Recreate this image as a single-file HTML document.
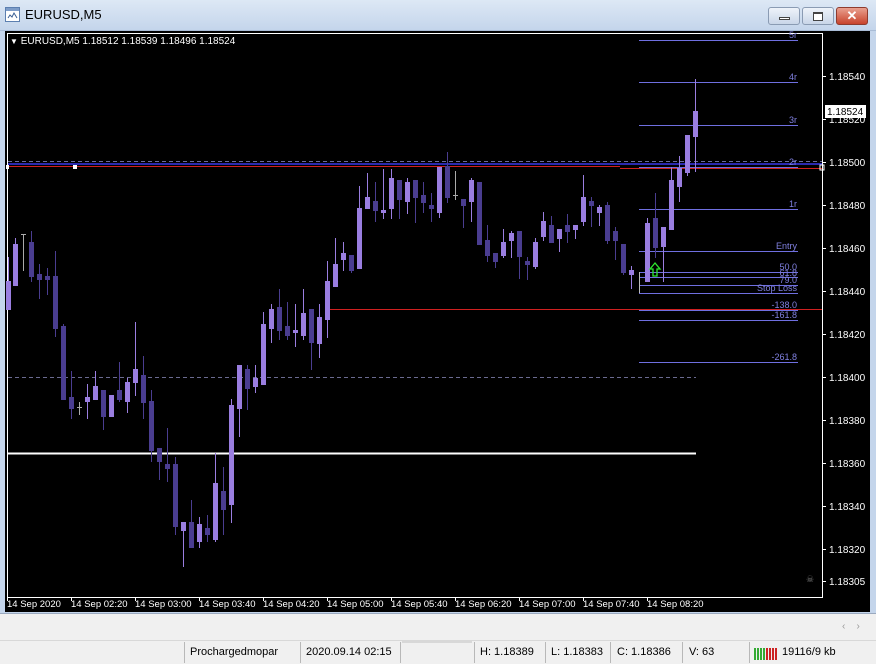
<!DOCTYPE html>
<html><head><meta charset="utf-8"><style>
*{margin:0;padding:0;box-sizing:border-box}
body{width:876px;height:664px;overflow:hidden;background:#f0f0f0;font-family:"Liberation Sans",sans-serif;position:relative}
.title{position:absolute;left:0;top:0;width:876px;height:31px;background:linear-gradient(#dde8f5,#c4d5eb);border-bottom:1px solid #a9bcd6}
.title span{position:absolute;left:25px;top:7px;font-size:13px;color:#000}
.btn{position:absolute;top:7px;height:18px;border:1px solid #8a9bb3;border-radius:3px;background:linear-gradient(#eef3fa,#c9d6e8)}
.sb{position:absolute;top:641px;height:23px;font-size:11px;line-height:23px;color:#000}
.sep{position:absolute;top:642px;width:1px;height:21px;background:#b8b8b8}
</style></head><body>
<div class="title">
<svg style="position:absolute;left:5px;top:7px" width="15" height="15"><rect x="0.5" y="0.5" width="14" height="14" fill="#fff" stroke="#5c7fb0"/><rect x="1" y="1" width="13" height="3" fill="#7d9cc8"/><path d="M3 11l2-3 2 2 2-4 3 5" stroke="#3a5f95" fill="none"/></svg>
<span>EURUSD,M5</span>
<div class="btn" style="left:768px;width:32px"><div style="position:absolute;left:10px;top:9px;width:11px;height:3px;background:#fff;border:1px solid #444"></div></div>
<div class="btn" style="left:802px;width:32px"><div style="position:absolute;left:10px;top:4px;width:10px;height:9px;border:1px solid #444;border-top-width:2px;background:#fff"></div></div>
<div class="btn" style="left:836px;width:32px;background:linear-gradient(#e9a08f,#c8432c);border-color:#8e3b2e;color:#fff;font-weight:bold;font-size:13px;text-align:center;line-height:16px">✕</div>
</div>
<div style="position:absolute;left:0;top:31px;width:876px;height:582px;background:#c4d5eb"></div>
<svg style="position:absolute;left:5px;top:31px" width="865" height="581" viewBox="5 31 865 581">
<rect x="5" y="31" width="865" height="581" fill="#000"/>
<rect x="7.5" y="33.5" width="815" height="564" fill="none" stroke="#fff"/>
<g font-family="Liberation Sans,sans-serif" font-size="10" fill="#fff">
<text x="10" y="44"><tspan font-size="8">▼</tspan> EURUSD,M5  1.18512 1.18539 1.18496 1.18524</text>
</g>
<!-- horizontal lines -->
<line x1="8" y1="161.5" x2="822" y2="161.5" stroke="#6a6aa0" stroke-dasharray="4,3"/>
<line x1="8" y1="164" x2="822" y2="164" stroke="#2a2ab0" stroke-width="2"/>
<line x1="8" y1="166.5" x2="620" y2="166.5" stroke="#d02020"/>
<line x1="620" y1="168.5" x2="822" y2="168.5" stroke="#d02020"/>
<line x1="328" y1="309.5" x2="822" y2="309.5" stroke="#d02020"/>
<line x1="8" y1="377.5" x2="696" y2="377.5" stroke="#6a6a90" stroke-dasharray="4,3"/>
<line x1="8" y1="453.5" x2="696" y2="453.5" stroke="#fff" stroke-width="2"/>
<rect x="73" y="165" width="4" height="4" fill="#fff"/><rect x="6" y="165" width="3" height="4" fill="#fff"/><rect x="820" y="165" width="4" height="5" fill="none" stroke="#fff"/>
<!-- fib lines -->
<g stroke="#6f6fe0">
<line x1="639" y1="40.5" x2="798" y2="40.5"/><line x1="639" y1="82.5" x2="798" y2="82.5"/>
<line x1="639" y1="125.5" x2="798" y2="125.5"/><line x1="639" y1="167.5" x2="798" y2="167.5"/>
<line x1="639" y1="209.5" x2="798" y2="209.5"/><line x1="639" y1="251.5" x2="798" y2="251.5"/>
<line x1="639" y1="272.5" x2="798" y2="272.5"/><line x1="639" y1="277.5" x2="798" y2="277.5"/>
<line x1="639" y1="285.5" x2="798" y2="285.5"/><line x1="639" y1="293.5" x2="798" y2="293.5"/>
<line x1="639" y1="310.5" x2="798" y2="310.5"/><line x1="639" y1="320.5" x2="798" y2="320.5"/>
<line x1="639" y1="362.5" x2="798" y2="362.5"/>
</g>
<line x1="639.5" y1="272" x2="639.5" y2="293" stroke="#bbb"/>
<g font-family="Liberation Sans,sans-serif" font-size="9" fill="#8080e0" text-anchor="end">
<text x="797" y="38">5r</text><text x="797" y="80">4r</text><text x="797" y="123">3r</text><text x="797" y="165">2r</text>
<text x="797" y="207">1r</text><text x="797" y="249">Entry</text><text x="797" y="270">50.0</text><text x="797" y="276">61.8</text>
<text x="797" y="283">79.0</text><text x="797" y="291">Stop Loss</text><text x="797" y="308">-138.0</text><text x="797" y="318">-161.8</text><text x="797" y="360">-261.8</text>
</g>
<!-- candles -->
<g id="c">
<g stroke="#9a7ee0" fill="#9a7ee0">
<line x1="8.5" y1="257" x2="8.5" y2="310"/><rect x="6" y="281" width="5" height="29" stroke="none"/>
<line x1="15.5" y1="238" x2="15.5" y2="286"/><rect x="13" y="244" width="5" height="42" stroke="none"/>
<line x1="23.5" y1="234" x2="23.5" y2="271" stroke="#aaa"/><line x1="21" y1="234.5" x2="26" y2="234.5" stroke="#aaa"/>
<line x1="79.5" y1="402" x2="79.5" y2="415" stroke="#aaa"/><line x1="77" y1="407.5" x2="82" y2="407.5" stroke="#aaa"/>
<line x1="87.5" y1="384" x2="87.5" y2="419"/><rect x="85" y="397" width="5" height="5" stroke="none"/>
<line x1="95.5" y1="371" x2="95.5" y2="400"/><rect x="93" y="386" width="5" height="14" stroke="none"/>
<rect x="109" y="395" width="5" height="22" stroke="none"/>
<line x1="127.5" y1="378" x2="127.5" y2="413"/><rect x="125" y="382" width="5" height="20" stroke="none"/>
<line x1="135.5" y1="322" x2="135.5" y2="396"/><rect x="133" y="369" width="5" height="14" stroke="none"/>
<line x1="183.5" y1="522" x2="183.5" y2="567"/><rect x="181" y="522" width="5" height="9" stroke="none"/>
<line x1="199.5" y1="517" x2="199.5" y2="548"/><rect x="197" y="524" width="5" height="18" stroke="none"/>
<line x1="215.5" y1="453" x2="215.5" y2="542"/><rect x="213" y="483" width="5" height="57" stroke="none"/>
<line x1="231.5" y1="399" x2="231.5" y2="523"/><rect x="229" y="405" width="5" height="100" stroke="none"/>
<line x1="239.5" y1="365" x2="239.5" y2="437"/><rect x="237" y="365" width="5" height="44" stroke="none"/>
<line x1="255.5" y1="365" x2="255.5" y2="393"/><rect x="253" y="378" width="5" height="9" stroke="none"/>
<line x1="263.5" y1="312" x2="263.5" y2="385"/><rect x="261" y="324" width="5" height="61" stroke="none"/>
<line x1="271.5" y1="304" x2="271.5" y2="343"/><rect x="269" y="309" width="5" height="20" stroke="none"/>
<line x1="295.5" y1="304" x2="295.5" y2="347"/><rect x="293" y="330" width="5" height="3" stroke="none"/>
<line x1="303.5" y1="289" x2="303.5" y2="340"/><rect x="301" y="313" width="5" height="23" stroke="none"/>
<line x1="319.5" y1="304" x2="319.5" y2="358"/><rect x="317" y="317" width="5" height="27" stroke="none"/>
<line x1="327.5" y1="261" x2="327.5" y2="338"/><rect x="325" y="281" width="5" height="39" stroke="none"/>
<line x1="335.5" y1="238" x2="335.5" y2="287"/><rect x="333" y="264" width="5" height="23" stroke="none"/>
<line x1="343.5" y1="242" x2="343.5" y2="271"/><rect x="341" y="253" width="5" height="7" stroke="none"/>
<line x1="359.5" y1="186" x2="359.5" y2="269"/><rect x="357" y="208" width="5" height="61" stroke="none"/>
<line x1="367.5" y1="173" x2="367.5" y2="209"/><rect x="365" y="197" width="5" height="12" stroke="none"/>
<line x1="383.5" y1="169" x2="383.5" y2="219"/><rect x="381" y="210" width="5" height="3" stroke="none"/>
<line x1="391.5" y1="169" x2="391.5" y2="219"/><rect x="389" y="178" width="5" height="31" stroke="none"/>
<line x1="407.5" y1="178" x2="407.5" y2="214"/><rect x="405" y="182" width="5" height="20" stroke="none"/>
<line x1="439.5" y1="167" x2="439.5" y2="218"/><rect x="437" y="167" width="5" height="46" stroke="none"/>
<line x1="455.5" y1="171" x2="455.5" y2="200" stroke="#aaa"/><line x1="453" y1="195.5" x2="458" y2="195.5" stroke="#aaa"/>
<line x1="471.5" y1="178" x2="471.5" y2="222"/><rect x="469" y="180" width="5" height="22" stroke="none"/>
<line x1="503.5" y1="229" x2="503.5" y2="258"/><rect x="501" y="242" width="5" height="14" stroke="none"/>
<line x1="511.5" y1="231" x2="511.5" y2="258"/><rect x="509" y="233" width="5" height="8" stroke="none"/>
<line x1="535.5" y1="238" x2="535.5" y2="269"/><rect x="533" y="242" width="5" height="25" stroke="none"/>
<line x1="543.5" y1="212" x2="543.5" y2="241"/><rect x="541" y="221" width="5" height="16" stroke="none"/>
<line x1="559.5" y1="229" x2="559.5" y2="252"/><rect x="557" y="229" width="5" height="10" stroke="none"/>
<line x1="575.5" y1="225" x2="575.5" y2="239"/><rect x="573" y="225" width="5" height="5" stroke="none"/>
<line x1="583.5" y1="175" x2="583.5" y2="226"/><rect x="581" y="197" width="5" height="25" stroke="none"/>
<line x1="599.5" y1="205" x2="599.5" y2="226"/><rect x="597" y="207" width="5" height="6" stroke="none"/>
<line x1="631.5" y1="266" x2="631.5" y2="289"/><rect x="629" y="270" width="5" height="5" stroke="none"/>
<line x1="647.5" y1="218" x2="647.5" y2="282"/><rect x="645" y="223" width="5" height="59" stroke="none"/>
<line x1="663.5" y1="227" x2="663.5" y2="282"/><rect x="661" y="227" width="5" height="20" stroke="none"/>
<line x1="671.5" y1="167" x2="671.5" y2="230"/><rect x="669" y="180" width="5" height="50" stroke="none"/>
<line x1="679.5" y1="156" x2="679.5" y2="202"/><rect x="677" y="168" width="5" height="19" stroke="none"/>
<line x1="687.5" y1="135" x2="687.5" y2="176"/><rect x="685" y="135" width="5" height="38" stroke="none"/>
<line x1="695.5" y1="79" x2="695.5" y2="172"/><rect x="693" y="111" width="5" height="26" stroke="none"/>
</g>
<g stroke="#4a3d90" fill="#4a3d90">
<line x1="31.5" y1="231" x2="31.5" y2="282"/><rect x="29" y="242" width="5" height="35" stroke="none"/>
<line x1="39.5" y1="264" x2="39.5" y2="299"/><rect x="37" y="274" width="5" height="6" stroke="none"/>
<line x1="47.5" y1="268" x2="47.5" y2="295"/><rect x="45" y="276" width="5" height="4" stroke="none"/>
<line x1="55.5" y1="251" x2="55.5" y2="337"/><rect x="53" y="276" width="5" height="53" stroke="none"/>
<line x1="63.5" y1="324" x2="63.5" y2="400"/><rect x="61" y="326" width="5" height="74" stroke="none"/>
<line x1="71.5" y1="371" x2="71.5" y2="419"/><rect x="69" y="397" width="5" height="12" stroke="none"/>
<line x1="103.5" y1="390" x2="103.5" y2="430"/><rect x="101" y="390" width="5" height="27" stroke="none"/>
<line x1="119.5" y1="362" x2="119.5" y2="402"/><rect x="117" y="390" width="5" height="10" stroke="none"/>
<line x1="143.5" y1="356" x2="143.5" y2="419"/><rect x="141" y="375" width="5" height="28" stroke="none"/>
<line x1="151.5" y1="390" x2="151.5" y2="462"/><rect x="149" y="401" width="5" height="50" stroke="none"/>
<line x1="159.5" y1="448" x2="159.5" y2="480"/><rect x="157" y="448" width="5" height="14" stroke="none"/>
<line x1="167.5" y1="428" x2="167.5" y2="482"/><rect x="165" y="464" width="5" height="5" stroke="none"/>
<line x1="175.5" y1="457" x2="175.5" y2="535"/><rect x="173" y="464" width="5" height="63" stroke="none"/>
<line x1="191.5" y1="500" x2="191.5" y2="548"/><rect x="189" y="522" width="5" height="26" stroke="none"/>
<line x1="207.5" y1="515" x2="207.5" y2="542"/><rect x="205" y="528" width="5" height="7" stroke="none"/>
<line x1="223.5" y1="467" x2="223.5" y2="535"/><rect x="221" y="491" width="5" height="19" stroke="none"/>
<line x1="247.5" y1="365" x2="247.5" y2="410"/><rect x="245" y="369" width="5" height="20" stroke="none"/>
<line x1="279.5" y1="289" x2="279.5" y2="340"/><rect x="277" y="307" width="5" height="24" stroke="none"/>
<line x1="287.5" y1="302" x2="287.5" y2="340"/><rect x="285" y="326" width="5" height="10" stroke="none"/>
<line x1="311.5" y1="309" x2="311.5" y2="370"/><rect x="309" y="309" width="5" height="34" stroke="none"/>
<line x1="351.5" y1="255" x2="351.5" y2="273"/><rect x="349" y="255" width="5" height="16" stroke="none"/>
<line x1="375.5" y1="182" x2="375.5" y2="222"/><rect x="373" y="201" width="5" height="10" stroke="none"/>
<line x1="399.5" y1="180" x2="399.5" y2="219"/><rect x="397" y="180" width="5" height="20" stroke="none"/>
<line x1="415.5" y1="180" x2="415.5" y2="223"/><rect x="413" y="180" width="5" height="18" stroke="none"/>
<line x1="423.5" y1="182" x2="423.5" y2="213"/><rect x="421" y="195" width="5" height="8" stroke="none"/>
<line x1="431.5" y1="193" x2="431.5" y2="222"/><rect x="429" y="205" width="5" height="4" stroke="none"/>
<line x1="447.5" y1="152" x2="447.5" y2="203"/><rect x="445" y="166" width="5" height="32" stroke="none"/>
<line x1="463.5" y1="199" x2="463.5" y2="228"/><rect x="461" y="199" width="5" height="7" stroke="none"/>
<rect x="477" y="182" width="5" height="63" stroke="none"/>
<line x1="487.5" y1="225" x2="487.5" y2="262"/><rect x="485" y="240" width="5" height="16" stroke="none"/>
<line x1="495.5" y1="253" x2="495.5" y2="268"/><rect x="493" y="253" width="5" height="9" stroke="none"/>
<line x1="519.5" y1="231" x2="519.5" y2="279"/><rect x="517" y="231" width="5" height="26" stroke="none"/>
<line x1="527.5" y1="257" x2="527.5" y2="280"/><rect x="525" y="261" width="5" height="4" stroke="none"/>
<line x1="551.5" y1="216" x2="551.5" y2="243"/><rect x="549" y="225" width="5" height="18" stroke="none"/>
<line x1="567.5" y1="214" x2="567.5" y2="243"/><rect x="565" y="225" width="5" height="7" stroke="none"/>
<line x1="591.5" y1="197" x2="591.5" y2="227"/><rect x="589" y="201" width="5" height="5" stroke="none"/>
<line x1="607.5" y1="202" x2="607.5" y2="244"/><rect x="605" y="205" width="5" height="36" stroke="none"/>
<line x1="615.5" y1="227" x2="615.5" y2="260"/><rect x="613" y="231" width="5" height="10" stroke="none"/>
<line x1="623.5" y1="244" x2="623.5" y2="275"/><rect x="621" y="244" width="5" height="29" stroke="none"/>
<line x1="655.5" y1="193" x2="655.5" y2="258"/><rect x="653" y="218" width="5" height="30" stroke="none"/>
</g>
</g>
<path d="M655 263l-5 6h3v7h4v-7h3z" fill="none" stroke="#2ee82e" stroke-width="1.3"/>
<!-- axis -->
<g stroke="#fff"><line x1="822" y1="76.5" x2="826" y2="76.5"/><line x1="822" y1="119.5" x2="826" y2="119.5"/><line x1="822" y1="162.5" x2="826" y2="162.5"/><line x1="822" y1="205.5" x2="826" y2="205.5"/><line x1="822" y1="248.5" x2="826" y2="248.5"/><line x1="822" y1="291.5" x2="826" y2="291.5"/><line x1="822" y1="334.5" x2="826" y2="334.5"/><line x1="822" y1="377.5" x2="826" y2="377.5"/><line x1="822" y1="420.5" x2="826" y2="420.5"/><line x1="822" y1="463.5" x2="826" y2="463.5"/><line x1="822" y1="506.5" x2="826" y2="506.5"/><line x1="822" y1="549.5" x2="826" y2="549.5"/><line x1="822" y1="581.5" x2="826" y2="581.5"/></g>
<g font-family="Liberation Sans,sans-serif" font-size="10" fill="#fff">
<text x="829" y="80">1.18540</text><text x="829" y="123">1.18520</text><text x="829" y="166">1.18500</text><text x="829" y="209">1.18480</text><text x="829" y="252">1.18460</text><text x="829" y="295">1.18440</text><text x="829" y="338">1.18420</text><text x="829" y="381">1.18400</text><text x="829" y="424">1.18380</text><text x="829" y="467">1.18360</text><text x="829" y="510">1.18340</text><text x="829" y="553">1.18320</text><text x="829" y="585">1.18305</text>
</g>
<rect x="825" y="105" width="41" height="13" fill="#fff"/>
<text x="827" y="115" font-family="Liberation Sans,sans-serif" font-size="10" fill="#000">1.18524</text>
<text x="806" y="582" font-family="Liberation Sans,sans-serif" font-size="9" fill="#777">☠</text>
<g stroke="#fff"><line x1="7.5" y1="597" x2="7.5" y2="601"/><line x1="71.5" y1="597" x2="71.5" y2="601"/><line x1="135.5" y1="597" x2="135.5" y2="601"/><line x1="199.5" y1="597" x2="199.5" y2="601"/><line x1="263.5" y1="597" x2="263.5" y2="601"/><line x1="327.5" y1="597" x2="327.5" y2="601"/><line x1="391.5" y1="597" x2="391.5" y2="601"/><line x1="455.5" y1="597" x2="455.5" y2="601"/><line x1="519.5" y1="597" x2="519.5" y2="601"/><line x1="583.5" y1="597" x2="583.5" y2="601"/><line x1="647.5" y1="597" x2="647.5" y2="601"/></g>
<g font-family="Liberation Sans,sans-serif" font-size="9.5" fill="#fff">
<text x="7" y="607">14 Sep 2020</text><text x="71" y="607">14 Sep 02:20</text><text x="135" y="607">14 Sep 03:00</text><text x="199" y="607">14 Sep 03:40</text><text x="263" y="607">14 Sep 04:20</text><text x="327" y="607">14 Sep 05:00</text><text x="391" y="607">14 Sep 05:40</text><text x="455" y="607">14 Sep 06:20</text><text x="519" y="607">14 Sep 07:00</text><text x="583" y="607">14 Sep 07:40</text><text x="647" y="607">14 Sep 08:20</text>
</g>
</svg>
<div style="position:absolute;left:0;top:613px;width:876px;height:27px;background:#f0f0f0;border-top:1px solid #9aa9bf"></div>
<div style="position:absolute;left:842px;top:621px;font-size:10px;color:#999">‹&nbsp;&nbsp;&nbsp;&nbsp;›</div>
<div style="position:absolute;left:0;top:640px;width:876px;height:24px;background:#f0f0f0;border-top:1px solid #d8d8d8"></div>
<div class="sep" style="left:184px"></div><div class="sep" style="left:300px"></div><div class="sep" style="left:400px"></div><div class="sep" style="left:474px"></div><div class="sep" style="left:545px"></div><div class="sep" style="left:610px"></div><div class="sep" style="left:682px"></div><div class="sep" style="left:749px"></div>
<div style="position:absolute;left:402px;top:640px;width:70px;height:3px;background:#d8d8d8"></div>
<div class="sb" style="left:190px">Prochargedmopar</div>
<div class="sb" style="left:306px">2020.09.14 02:15</div>
<div class="sb" style="left:480px">H: 1.18389</div>
<div class="sb" style="left:551px">L: 1.18383</div>
<div class="sb" style="left:617px">C: 1.18386</div>
<div class="sb" style="left:689px">V: 63</div>
<svg style="position:absolute;left:754px;top:645px" width="24" height="15"><g stroke-width="2"><line x1="1" y1="15" x2="1" y2="3" stroke="#3a3"/><line x1="4" y1="15" x2="4" y2="3" stroke="#3a3"/><line x1="7" y1="15" x2="7" y2="3" stroke="#3a3"/><line x1="10" y1="15" x2="10" y2="3" stroke="#3a3"/><line x1="13" y1="15" x2="13" y2="3" stroke="#c22"/><line x1="16" y1="15" x2="16" y2="3" stroke="#c22"/><line x1="19" y1="15" x2="19" y2="3" stroke="#c22"/><line x1="22" y1="15" x2="22" y2="3" stroke="#c22"/></g></svg>
<div class="sb" style="left:782px">19116/9 kb</div>
</body></html>
